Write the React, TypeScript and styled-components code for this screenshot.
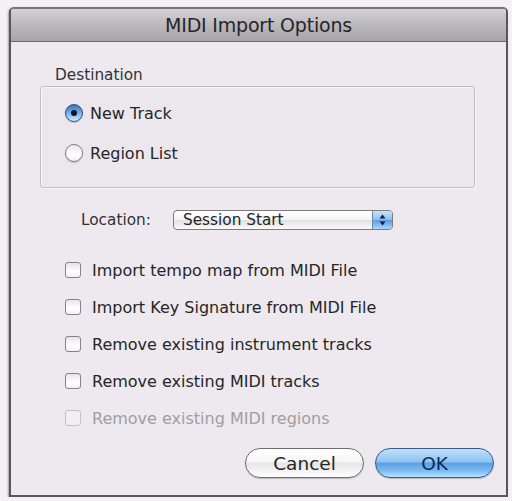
import React from "react";
import styled, { createGlobalStyle } from "styled-components";

const Global = createGlobalStyle`
  html, body { margin: 0; padding: 0; background: #f3f1f4; }
  body { font-family: "DejaVu Sans", "Liberation Sans", sans-serif; }
`;

const Window = styled.div`
  margin: 7px 0 0 9px;
  width: 499px;
  height: 490px;
  box-sizing: border-box;
  border: 2px solid #58565b;
  border-top-color: #77757a;
  border-radius: 5px 5px 0 0;
  background: #ede9ee;
  display: flex;
  flex-direction: column;
  box-shadow: -1px 1px 2px rgba(0, 0, 0, 0.35);
`;

const TitleBar = styled.div`
  height: 32px;
  flex: none;
  display: flex;
  align-items: center;
  justify-content: center;
  background: linear-gradient(#d4d2d7, #bbb9be 50%, #a6a4a9);
  border-bottom: 1px solid #6c6a6f;
  border-radius: 3px 3px 0 0;
  font-size: 19px;
  color: #262628;
  letter-spacing: -0.2px;
`;

const Body = styled.div`
  flex: 1;
  display: flex;
  flex-direction: column;
  padding: 24px 12px 0 29px;
`;

const GroupLabel = styled.div`
  margin-left: 15px;
  font-size: 15.3px;
  line-height: 18px;
  color: #333;
`;

const Group = styled.div`
  margin-top: 2px;
  width: 435px;
  height: 102px;
  box-sizing: border-box;
  border: 1px solid #c2bfc4;
  border-radius: 3px;
  box-shadow: inset 1px 1px 0 #f7f5f8, 1px 1px 0 #f7f5f8;
  background: #ebe7ec;
  display: flex;
  flex-direction: column;
  gap: 20px;
  padding: 16px 0 0 24px;
`;

const Row = styled.label<{ $disabled?: boolean }>`
  display: flex;
  align-items: center;
  height: 20px;
  font-size: 16px;
  color: ${(p) => (p.$disabled ? "#a09ea2" : "#262628")};
`;

const Radio = styled.span<{ $on?: boolean }>`
  width: 18px;
  height: 18px;
  flex: none;
  border-radius: 50%;
  box-sizing: border-box;
  margin-right: 7px;
  position: relative;
  border: 1px solid ${(p) => (p.$on ? "#2f4f7e" : "#7f7d82")};
  box-shadow: 0 1px 1px rgba(0, 0, 0, 0.2);
  background: ${(p) =>
    p.$on
      ? "linear-gradient(#3e72bd, #6fa9e6 45%, #9fd0fb 75%, #d2efff)"
      : "linear-gradient(#e8e8e8, #ffffff 60%, #f2f2f2)"};
  &::after {
    content: "";
    display: ${(p) => (p.$on ? "block" : "none")};
    position: absolute;
    left: 5px;
    top: 5px;
    width: 6px;
    height: 6px;
    border-radius: 50%;
    background: #0f1728;
  }
`;

const LocationRow = styled.div`
  margin-top: 22px;
  display: flex;
  align-items: center;
  height: 20px;
  padding-left: 41px;
  font-size: 15.3px;
  color: #333;
`;

const LocationLabel = styled.span`
  width: 92px;
`;

const Popup = styled.div`
  width: 220px;
  height: 20px;
  box-sizing: border-box;
  border: 1px solid #7d7b80;
  border-radius: 4px;
  display: flex;
  overflow: hidden;
  background: linear-gradient(#ffffff, #f3f3f3 50%, #e2e2e2 52%, #fafafa);
  font-size: 15.3px;
  color: #242424;
`;

const PopupText = styled.span`
  flex: 1;
  padding-left: 9px;
  line-height: 18px;
`;

const PopupArrows = styled.span`
  width: 19px;
  border-left: 1px solid #6b86ad;
  background: linear-gradient(#c9e3fb, #8dbff0 48%, #5d9ce5 52%, #a9d6fb);
  display: flex;
  align-items: center;
  justify-content: center;
`;

const Checks = styled.div`
  margin-top: 30px;
  display: flex;
  flex-direction: column;
  gap: 17px;
  padding-left: 25px;
`;

const Box = styled.span<{ $disabled?: boolean }>`
  width: 16px;
  height: 16px;
  flex: none;
  box-sizing: border-box;
  margin-right: 11px;
  border: 1px solid ${(p) => (p.$disabled ? "#c3c1c6" : "#858388")};
  border-radius: 3px;
  background: ${(p) =>
    p.$disabled ? "#f1eff2" : "linear-gradient(#e6e6e6, #ffffff 60%, #f0f0f0)"};
`;

const Buttons = styled.div`
  margin-top: 20px;
  display: flex;
  justify-content: flex-end;
  gap: 11px;
`;

const Button = styled.button<{ $primary?: boolean }>`
  width: 119px;
  height: 30px;
  border-radius: 15px;
  font-family: "DejaVu Sans", sans-serif;
  font-size: 18.5px;
  padding: 0;
  color: ${(p) => (p.$primary ? "#0f2a52" : "#262628")};
  border: 1px solid ${(p) => (p.$primary ? "#365a8a" : "#6e6c72")};
  background: ${(p) =>
    p.$primary
      ? "linear-gradient(#bfe0fb, #8ec4f2 45%, #5d9fe6 52%, #7fbdf3 80%, #b9e6ff)"
      : "linear-gradient(#ffffff, #f6f6f6 45%, #e6e6e6 52%, #f4f4f4 80%, #ffffff)"};
  box-shadow: 0 1px 1px rgba(0, 0, 0, 0.2);
`;

const checks = [
  { text: "Import tempo map from MIDI File" },
  { text: "Import Key Signature from MIDI File" },
  { text: "Remove existing instrument tracks" },
  { text: "Remove existing MIDI tracks" },
  { text: "Remove existing MIDI regions", disabled: true },
];

export default function App() {
  return (
    <>
      <Global />
      <Window>
        <TitleBar>MIDI Import Options</TitleBar>
        <Body>
          <GroupLabel>Destination</GroupLabel>
          <Group>
            <Row>
              <Radio $on />
              New Track
            </Row>
            <Row>
              <Radio />
              Region List
            </Row>
          </Group>
          <LocationRow>
            <LocationLabel>Location:</LocationLabel>
            <Popup>
              <PopupText>Session Start</PopupText>
              <PopupArrows>
                <svg width="7" height="12" viewBox="0 0 7 12">
                  <path d="M3.5 0.5 L6.5 4.5 H0.5 Z" fill="#16203a" />
                  <path d="M3.5 11.5 L6.5 7.5 H0.5 Z" fill="#16203a" />
                </svg>
              </PopupArrows>
            </Popup>
          </LocationRow>
          <Checks>
            {checks.map((c) => (
              <Row key={c.text} $disabled={c.disabled}>
                <Box $disabled={c.disabled} />
                {c.text}
              </Row>
            ))}
          </Checks>
          <Buttons>
            <Button>Cancel</Button>
            <Button $primary>OK</Button>
          </Buttons>
        </Body>
      </Window>
    </>
  );
}
